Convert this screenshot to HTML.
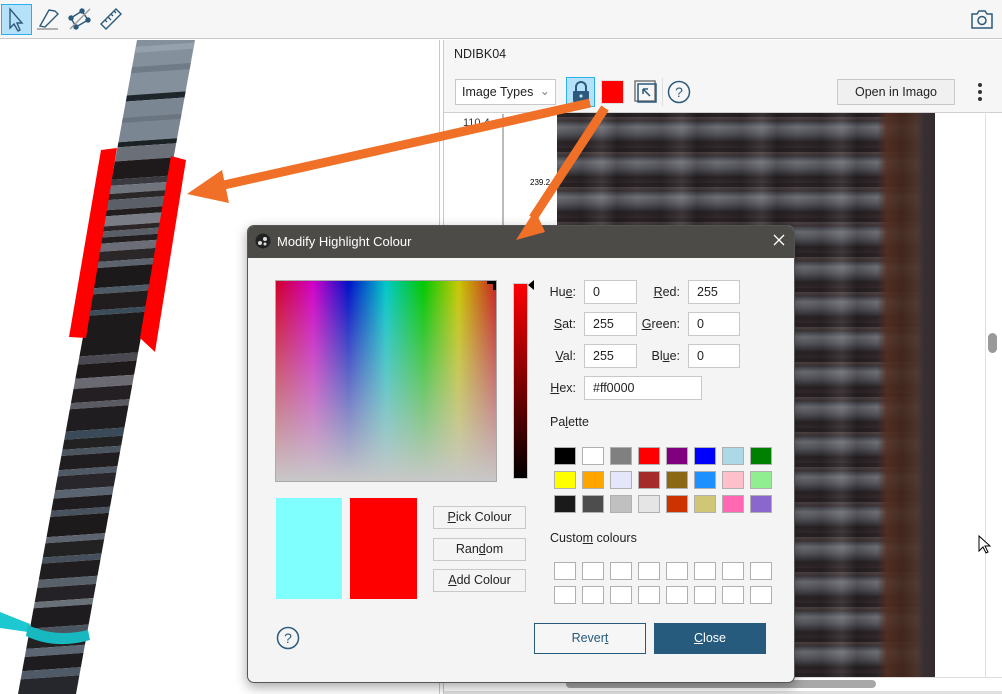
<!DOCTYPE html>
<html><head><meta charset="utf-8"><style>
*{box-sizing:border-box;margin:0;padding:0}
body{width:1002px;height:694px;overflow:hidden;background:#fff;font-family:"Liberation Sans",sans-serif;font-size:12px;color:#222;position:relative}
.abs{position:absolute}
.u{text-decoration:underline}
.inp{position:absolute;background:#fff;border:1px solid #c8c8c8;height:24px;font-size:12.5px;padding:4px 8px}
.lbl{position:absolute;font-size:12.5px;text-align:right}
.sw{position:absolute;width:22px;height:18px;border:1px solid #b0b0b0}
.btn{position:absolute;border:1px solid #c8c8c8;background:#f4f4f4;text-align:center;font-size:12.5px;line-height:21px}
</style></head><body>
<div class="abs" style="left:0;top:0;width:1002px;height:39px;background:#f6f6f6;border-bottom:1px solid #c8c8c8"></div>
<div class="abs" style="left:1px;top:4px;width:31px;height:31px;background:#b5e2f8;border:1px solid #2bb0ee"></div>
<svg class="abs" style="left:0;top:0" width="130" height="39" fill="none" stroke="#2b5a7c" stroke-width="1.4">
<path d="M10 9 L10 28 L14 24 L18 31 L20 30 L17 23 L22 23 Z"/>
<path d="M40 26 L49 10 L55 11 L58 14 L45 27 Z"/><path d="M37 29 L58 29" stroke="#999"/>
<circle cx="82" cy="11" r="2" fill="#2b5a7c"/><circle cx="88" cy="20" r="2" fill="#2b5a7c"/><circle cx="76" cy="27" r="2" fill="#2b5a7c"/><circle cx="71" cy="18" r="2" fill="#2b5a7c"/>
<path d="M71 18 L82 11 L88 20 L76 27 Z"/><path d="M70 29 L90 9" stroke="#999"/>
<path d="M101 24 L116 9 L121 14 L106 29 Z M105 20 L107 22 M108 17 L111 20 M111 14 L113 16 M114 11 L116 13"/>
</svg>
<svg class="abs" style="left:970px;top:8px" width="24" height="22" fill="none" stroke="#2b5a7c" stroke-width="1.5"><path d="M2 6 H7 L9 3 H15 L17 6 H22 V20 H2 Z"/><circle cx="12" cy="12.5" r="4"/></svg>
<div class="abs" style="left:0;top:40px;width:440px;height:654px;border-right:1px solid #c8c8c8;background:#fff"></div>
<svg class="abs" style="left:0;top:40px" width="440" height="654">
<defs><clipPath id="cp"><polygon points="137,0 195,0 76,654 18,654"/></clipPath>
<linearGradient id="sh" gradientUnits="userSpaceOnUse" x1="100" y1="300" x2="160" y2="310"><stop offset="0" stop-color="#000" stop-opacity=".3"/><stop offset=".5" stop-color="#fff" stop-opacity=".08"/><stop offset="1" stop-color="#000" stop-opacity=".3"/></linearGradient></defs>
<g clip-path="url(#cp)"><g transform="rotate(-4 100 300)">
<rect x="-100" y="-40" width="400" height="100" fill="#84919c"/>
<rect x="-100" y="10" width="400" height="6" fill="#95a1ac"/>
<rect x="-100" y="30" width="400" height="6" fill="#6f7b86"/>
<rect x="-100" y="58" width="400" height="6" fill="#1e262c"/>
<rect x="-100" y="64" width="400" height="40" fill="#7a8792"/>
<rect x="-100" y="80" width="400" height="5" fill="#6a7580"/>
<rect x="-100" y="104" width="400" height="5" fill="#1b2226"/>
<rect x="-100" y="109" width="400" height="14" fill="#6b6f78"/>
<rect x="-100" y="123" width="400" height="18" fill="#1e1a1c"/>
<rect x="-100" y="141" width="400" height="6" fill="#3a3a40"/>
<rect x="-100" y="147" width="400" height="8" fill="#70747c"/>
<rect x="-100" y="155" width="400" height="6" fill="#2a2729"/>
<rect x="-100" y="161" width="400" height="10" fill="#5b5f68"/>
<rect x="-100" y="171" width="400" height="6" fill="#221e20"/>
<rect x="-100" y="177" width="400" height="10" fill="#7a7d85"/>
<rect x="-100" y="187" width="400" height="5" fill="#2c2628"/>
<rect x="-100" y="192" width="400" height="6" fill="#5a5e66"/>
<rect x="-100" y="198" width="400" height="6" fill="#231f21"/>
<rect x="-100" y="204" width="400" height="8" fill="#6b6e76"/>
<rect x="-100" y="212" width="400" height="10" fill="#2b2628"/>
<rect x="-100" y="222" width="400" height="6" fill="#5c636c"/>
<rect x="-100" y="228" width="400" height="20" fill="#1c191a"/>
<rect x="-100" y="248" width="400" height="6" fill="#4e5a66"/>
<rect x="-100" y="254" width="400" height="16" fill="#211d1f"/>
<rect x="-100" y="270" width="400" height="5" fill="#3b4c5a"/>
<rect x="-100" y="275" width="400" height="40" fill="#1d1a1c"/>
<rect x="-100" y="315" width="400" height="8" fill="#4a4850"/>
<rect x="-100" y="323" width="400" height="14" fill="#1e1a1c"/>
<rect x="-100" y="337" width="400" height="10" fill="#6b6a72"/>
<rect x="-100" y="347" width="400" height="14" fill="#241f22"/>
<rect x="-100" y="361" width="400" height="6" fill="#5a5a62"/>
<rect x="-100" y="367" width="400" height="22" fill="#1f1d20"/>
<rect x="-100" y="389" width="400" height="8" fill="#3b4a58"/>
<rect x="-100" y="397" width="400" height="10" fill="#222"/>
<rect x="-100" y="407" width="400" height="6" fill="#4a5560"/>
<rect x="-100" y="413" width="400" height="14" fill="#1f1d20"/>
<rect x="-100" y="427" width="400" height="6" fill="#505a66"/>
<rect x="-100" y="433" width="400" height="14" fill="#28262a"/>
<rect x="-100" y="447" width="400" height="8" fill="#5a6470"/>
<rect x="-100" y="455" width="400" height="12" fill="#1e1c1f"/>
<rect x="-100" y="467" width="400" height="6" fill="#48525e"/>
<rect x="-100" y="473" width="400" height="20" fill="#1d1a1c"/>
<rect x="-100" y="493" width="400" height="6" fill="#5d6470"/>
<rect x="-100" y="499" width="400" height="14" fill="#222"/>
<rect x="-100" y="513" width="400" height="6" fill="#45505c"/>
<rect x="-100" y="519" width="400" height="16" fill="#1f1d20"/>
<rect x="-100" y="535" width="400" height="8" fill="#58606a"/>
<rect x="-100" y="543" width="400" height="14" fill="#242226"/>
<rect x="-100" y="557" width="400" height="6" fill="#6a7078"/>
<rect x="-100" y="563" width="400" height="20" fill="#1e1c1f"/>
<rect x="-100" y="583" width="400" height="8" fill="#4a5560"/>
<rect x="-100" y="591" width="400" height="12" fill="#222"/>
<rect x="-100" y="603" width="400" height="8" fill="#5c6672"/>
<rect x="-100" y="611" width="400" height="14" fill="#1e1c1f"/>
<rect x="-100" y="625" width="400" height="8" fill="#505a66"/>
<rect x="-100" y="633" width="400" height="60" fill="#26272c"/>
</g></g>
<polygon points="101,110 117,108 86,298 69,297" fill="#f00"/>
<polygon points="171,116 186,120 155,312 140,298" fill="#f00"/>
<path d="M0 572 L30 584 L28 592 L0 588 Z" fill="#1ec8d0"/>
<path d="M28 585 Q55 598 88 590 L90 600 Q55 610 26 596 Z" fill="#18b8c0"/>
</svg>
<div class="abs" style="left:443px;top:40px;width:559px;height:654px;border-left:1px solid #c8c8c8;background:#fff"></div>
<div class="abs" style="left:444px;top:40px;width:558px;height:73px;background:#f6f6f6;border-bottom:1px solid #d0d0d0"></div>
<div class="abs" style="left:454px;top:47px;font-size:12.5px">NDIBK04</div>
<div class="abs" style="left:455px;top:79px;width:101px;height:26px;border:1px solid #c8c8c8;background:#fff;font-size:12.5px;padding:5px 6px">Image Types<span style="position:absolute;right:5px;top:3px;color:#888">&#8964;</span></div>
<div class="abs" style="left:566px;top:77px;width:29px;height:30px;background:#b5e2f8;border:1px solid #2bb0ee"></div>
<svg class="abs" style="left:570px;top:80px" width="22" height="24"><path d="M6 11 V7 A5 5 0 0 1 16 7 V11" fill="none" stroke="#2b5a7c" stroke-width="2"/><rect x="3" y="11" width="16" height="11" rx="1" fill="#2b5a7c"/><circle cx="11" cy="16" r="1.6" fill="#b5e2f8"/></svg>
<div class="abs" style="left:601px;top:80px;width:23px;height:24px;background:#f00;border:1px solid #ddd"></div>
<svg class="abs" style="left:634px;top:80px" width="24" height="24" fill="none" stroke="#2b5a7c" stroke-width="1.5"><rect x="1" y="1" width="20" height="20" stroke="#777"/><rect x="4" y="4" width="18" height="18"/><path d="M16 16 L9 9 M9 9 V14 M9 9 H14"/></svg>
<svg class="abs" style="left:667px;top:80px" width="25" height="25"><circle cx="12" cy="12" r="10.5" fill="none" stroke="#2b5a7c" stroke-width="1.5"/><text x="12" y="17" font-size="14" text-anchor="middle" fill="#2b5a7c" font-family="Liberation Sans">?</text></svg>
<div class="abs" style="left:662px;top:78px;width:1px;height:28px;background:#ddd"></div>
<div class="abs" style="left:837px;top:79px;width:118px;height:26px;border:1px solid #c8c8c8;background:#f0f0f0;font-size:12.5px;text-align:center;line-height:24px">Open in Imago</div>
<div class="abs" style="left:978px;top:83px;width:4px;height:4px;border-radius:2px;background:#333;box-shadow:0 7px 0 #333,0 14px 0 #333"></div>
<div class="abs" style="left:502px;top:114px;width:2px;height:563px;background:#bbb"></div>
<div class="abs" style="left:463px;top:117px;font-size:11px;color:#333">110.4</div>
<div class="abs" style="left:530px;top:178px;font-size:8px;color:#000">239.2</div>
<div class="abs" style="left:557px;top:113px;width:378px;height:564px;background:
linear-gradient(90deg,transparent 0,transparent 320px,rgba(90,50,35,.85) 330px,rgba(70,42,32,.9) 360px,#2a2224 366px,#3a3033 378px),
repeating-linear-gradient(180deg,#2a2326 0,#2a2326 4px,#4e4446 4px,#3e3536 8px,#45454c 9px,#6e6f76 14px,#5a5a61 20px,#3a383d 26px,#2a2326 29px,#332a2d 35px)"></div>
<div class="abs" style="left:557px;top:113px;width:378px;height:564px;background:repeating-linear-gradient(90deg,rgba(0,0,0,0) 0,rgba(0,0,0,.15) 25px,rgba(255,255,255,.07) 45px,rgba(0,0,0,.2) 60px,rgba(0,0,0,0) 80px)"></div>
<div class="abs" style="left:985px;top:114px;width:1px;height:563px;background:#e0e0e0"></div>
<div class="abs" style="left:988px;top:333px;width:9px;height:20px;border-radius:5px;background:#9a9a9a"></div>
<div class="abs" style="left:444px;top:677px;width:558px;height:1px;background:#ddd"></div>
<div class="abs" style="left:566px;top:680px;width:310px;height:8px;border-radius:4px;background:#a8a8a8"></div>
<div class="abs" style="left:444px;top:691px;width:558px;height:3px;background:#e0e0e0"></div>
<svg class="abs" style="left:978px;top:535px" width="14" height="20"><path d="M1 1 V16 L5 12 L8 18 L10 17 L7 11 L12 11 Z" fill="#fff" stroke="#000"/></svg>
<svg class="abs" style="left:0;top:0" width="1002" height="694">
<path d="M590 103 L215 187" stroke="#f07027" stroke-width="9"/>
<polygon points="187,194 222,170 229,203" fill="#f07027"/>
<path d="M605 108 L533 218" stroke="#f07027" stroke-width="9"/>
</svg>
<div class="abs" style="left:247px;top:225px;width:548px;height:458px;background:#f4f4f4;border:1px solid #555;border-radius:7px;box-shadow:0 4px 12px rgba(0,0,0,.35);overflow:hidden">
<div style="height:32px;background:#4d4b48;color:#fff;font-size:13px;padding:8px 0 0 29px">Modify Highlight Colour</div>
</div>
<svg class="abs" style="left:0;top:0" width="1002" height="694"><polygon points="516,240 535,210 545,232" fill="#f07027"/></svg>
<svg class="abs" style="left:255px;top:233px" width="16" height="16"><circle cx="8" cy="8" r="7.5" fill="#222"/><circle cx="5" cy="10" r="2" fill="#ddd"/><circle cx="10" cy="6" r="2" fill="#ddd"/><circle cx="10" cy="11" r="1.5" fill="#ddd"/></svg>
<svg class="abs" style="left:773px;top:234px" width="12" height="12"><path d="M1 1 L11 11 M11 1 L1 11" stroke="#fff" stroke-width="1.3"/></svg>
<div class="abs" style="left:275px;top:280px;width:222px;height:202px;border:1px solid #aaa;background:linear-gradient(180deg,rgba(200,200,200,0),#c8c8c8),linear-gradient(90deg,#d0002a,#d000c8 17%,#0010c8 33%,#00c8c8 50%,#00c800 67%,#c8c800 83%,#c82020)"></div>
<div class="abs" style="left:487px;top:281px;width:9px;height:9px;border-top:3px solid #000;border-right:3px solid #000"></div>
<div class="abs" style="left:513px;top:283px;width:15px;height:196px;border:1px solid #ccc;background:linear-gradient(#f00,#000)"></div>
<div class="abs" style="left:528px;top:280px;width:0;height:0;border-top:5px solid transparent;border-bottom:5px solid transparent;border-right:6px solid #000"></div>
<div class="lbl" style="left:540px;top:285px;width:36px">Hu<span class="u">e</span>:</div>
<div class="lbl" style="left:540px;top:317px;width:36px"><span class="u">S</span>at:</div>
<div class="lbl" style="left:540px;top:349px;width:36px"><span class="u">V</span>al:</div>
<div class="lbl" style="left:540px;top:381px;width:36px"><span class="u">H</span>ex:</div>
<div class="lbl" style="left:636px;top:285px;width:44px"><span class="u">R</span>ed:</div>
<div class="lbl" style="left:636px;top:317px;width:44px"><span class="u">G</span>reen:</div>
<div class="lbl" style="left:636px;top:349px;width:44px">Bl<span class="u">u</span>e:</div>
<div class="inp" style="left:584px;top:280px;width:53px">0</div>
<div class="inp" style="left:584px;top:312px;width:53px">255</div>
<div class="inp" style="left:584px;top:344px;width:53px">255</div>
<div class="inp" style="left:688px;top:280px;width:52px">255</div>
<div class="inp" style="left:688px;top:312px;width:52px">0</div>
<div class="inp" style="left:688px;top:344px;width:52px">0</div>
<div class="inp" style="left:584px;top:376px;width:118px">#ff0000</div>
<div class="abs" style="left:550px;top:415px;font-size:12.5px">Pa<span class="u">l</span>ette</div>
<div class="abs" style="left:550px;top:531px;font-size:12.5px">Custo<span class="u">m</span> colours</div>
<div class="abs" style="left:276px;top:498px;width:66px;height:101px;background:#80ffff"></div>
<div class="abs" style="left:350px;top:498px;width:67px;height:101px;background:#f00"></div>
<div class="btn" style="left:433px;top:506px;width:93px;height:23px"><span class="u">P</span>ick Colour</div>
<div class="btn" style="left:433px;top:538px;width:93px;height:23px">Ran<span class="u">d</span>om</div>
<div class="btn" style="left:433px;top:569px;width:93px;height:23px"><span class="u">A</span>dd Colour</div>
<svg class="abs" style="left:276px;top:626px" width="25" height="25"><circle cx="12" cy="12" r="10.5" fill="none" stroke="#2b5a7c" stroke-width="1.5"/><text x="12" y="17" font-size="14" text-anchor="middle" fill="#2b5a7c" font-family="Liberation Sans">?</text></svg>
<div class="abs" style="left:534px;top:623px;width:112px;height:31px;border:1px solid #265b7e;background:#f6f6f6;color:#265b7e;text-align:center;line-height:29px;font-size:12.5px">Rever<span class="u">t</span></div>
<div class="abs" style="left:654px;top:623px;width:112px;height:31px;background:#265b7e;color:#fff;text-align:center;line-height:31px;font-size:12.5px"><span class="u">C</span>lose</div>
<div class="sw" style="left:554px;top:447px;background:#000"></div><div class="sw" style="left:582px;top:447px;background:#fff"></div><div class="sw" style="left:610px;top:447px;background:#808080"></div><div class="sw" style="left:638px;top:447px;background:#f00"></div><div class="sw" style="left:666px;top:447px;background:#800080"></div><div class="sw" style="left:694px;top:447px;background:#00f"></div><div class="sw" style="left:722px;top:447px;background:#add8e6"></div><div class="sw" style="left:750px;top:447px;background:#008000"></div>
<div class="sw" style="left:554px;top:471px;background:#ff0"></div><div class="sw" style="left:582px;top:471px;background:#ffa500"></div><div class="sw" style="left:610px;top:471px;background:#e6e6fa"></div><div class="sw" style="left:638px;top:471px;background:#a52a2a"></div><div class="sw" style="left:666px;top:471px;background:#8b6914"></div><div class="sw" style="left:694px;top:471px;background:#1e90ff"></div><div class="sw" style="left:722px;top:471px;background:#ffc0cb"></div><div class="sw" style="left:750px;top:471px;background:#90ee90"></div>
<div class="sw" style="left:554px;top:495px;background:#1a1a1a"></div><div class="sw" style="left:582px;top:495px;background:#4d4d4d"></div><div class="sw" style="left:610px;top:495px;background:#c0c0c0"></div><div class="sw" style="left:638px;top:495px;background:#e5e5e5"></div><div class="sw" style="left:666px;top:495px;background:#cc3300"></div><div class="sw" style="left:694px;top:495px;background:#cfc678"></div><div class="sw" style="left:722px;top:495px;background:#ff69b4"></div><div class="sw" style="left:750px;top:495px;background:#8a67cc"></div>
<div class="sw" style="left:554px;top:562px;background:#fff"></div><div class="sw" style="left:582px;top:562px;background:#fff"></div><div class="sw" style="left:610px;top:562px;background:#fff"></div><div class="sw" style="left:638px;top:562px;background:#fff"></div><div class="sw" style="left:666px;top:562px;background:#fff"></div><div class="sw" style="left:694px;top:562px;background:#fff"></div><div class="sw" style="left:722px;top:562px;background:#fff"></div><div class="sw" style="left:750px;top:562px;background:#fff"></div>
<div class="sw" style="left:554px;top:586px;background:#fff"></div><div class="sw" style="left:582px;top:586px;background:#fff"></div><div class="sw" style="left:610px;top:586px;background:#fff"></div><div class="sw" style="left:638px;top:586px;background:#fff"></div><div class="sw" style="left:666px;top:586px;background:#fff"></div><div class="sw" style="left:694px;top:586px;background:#fff"></div><div class="sw" style="left:722px;top:586px;background:#fff"></div><div class="sw" style="left:750px;top:586px;background:#fff"></div>
</body></html>
